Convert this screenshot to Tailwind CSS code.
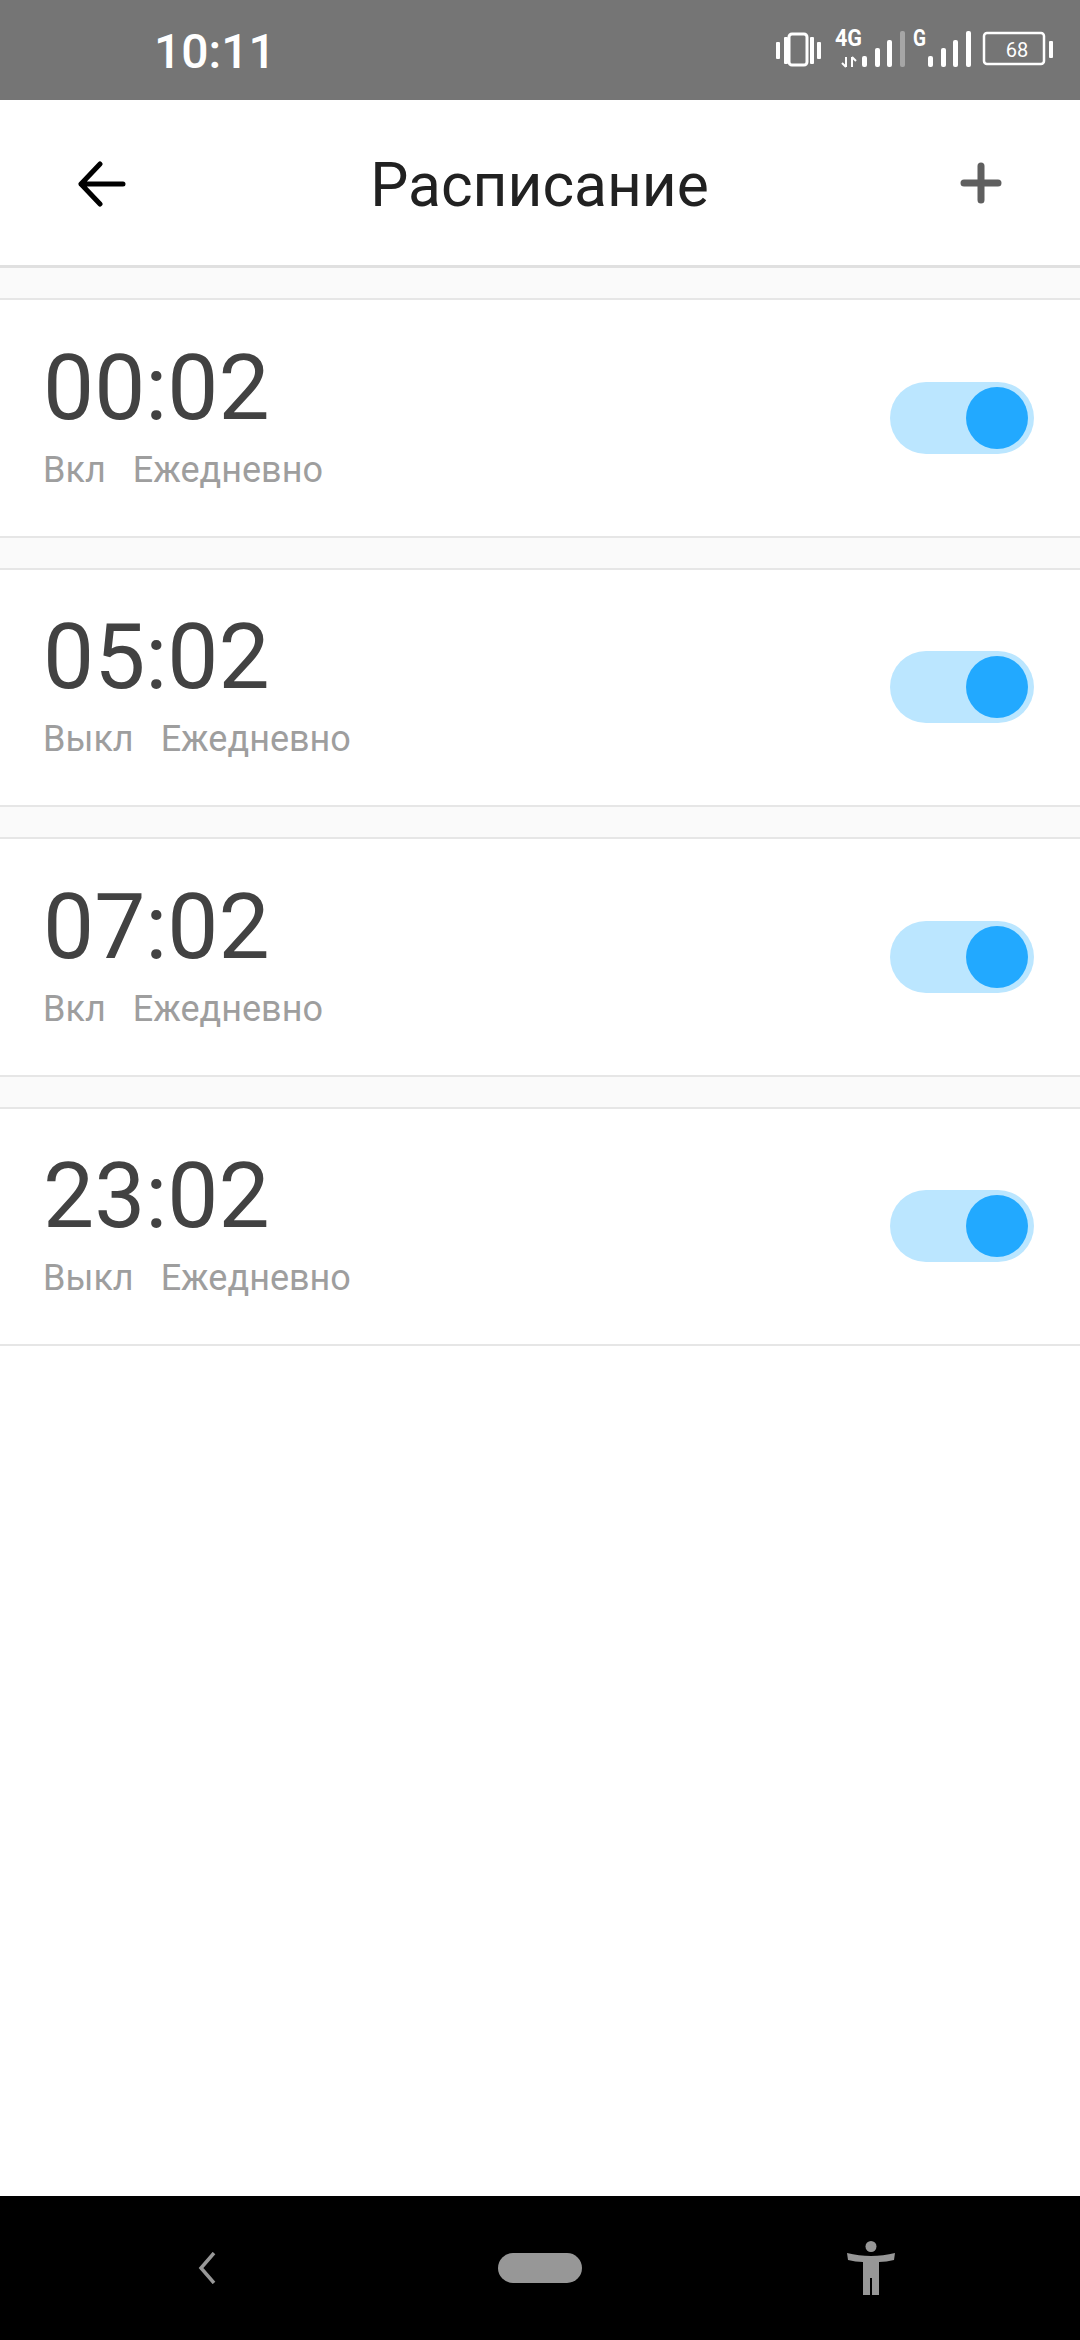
<!DOCTYPE html>
<html lang="ru">
<head>
    <meta charset="UTF-8">
    <meta name="viewport" content="width=device-width, initial-scale=1.0">
    <title>Расписание</title>
    <script src="https://cdn.jsdelivr.net/npm/@tailwindcss/browser@4"></script>
</head>
<body class="bg-white font-['Roboto',sans-serif]">
    <div class="flex flex-col w-[1080px] h-[2340px] overflow-hidden">
        <!-- status bar -->
        <div class="h-[100px] shrink-0 bg-[#757575] flex items-center justify-between pl-[154px] pr-[26px] text-white">
            <span class="text-[48px] leading-none font-medium pt-[3px]">10:11</span>
            <svg width="278" height="100" viewBox="776 0 278 100" fill="#fff">
                <rect x="776" y="42" width="4" height="17" rx="1"/>
                <rect x="784" y="37" width="4" height="27" rx="1"/>
                <rect x="789" y="34" width="18" height="31" rx="3" fill="none" stroke="#fff" stroke-width="3"/>
                <rect x="810" y="37" width="4" height="27" rx="1"/>
                <rect x="817" y="42" width="4" height="17" rx="1"/>
                <text x="835" y="46" font-family="Roboto" font-weight="700" font-size="23" textLength="27" lengthAdjust="spacingAndGlyphs">4G</text>
                <path d="M846 57v10M846 67l-4-4M852 67v-10M852 57l4 4" stroke="#fff" stroke-width="2" fill="none"/>
                <rect x="862" y="56" width="5" height="11" rx="2"/>
                <rect x="875" y="48" width="5" height="19" rx="2"/>
                <rect x="887" y="40" width="5" height="27" rx="2"/>
                <rect x="900" y="31" width="5" height="36" rx="2" fill="#a6a6a6"/>
                <text x="913" y="46" font-family="Roboto" font-weight="700" font-size="23" textLength="13" lengthAdjust="spacingAndGlyphs">G</text>
                <rect x="928" y="56" width="5" height="11" rx="2"/>
                <rect x="941" y="48" width="5" height="19" rx="2"/>
                <rect x="953" y="40" width="5" height="27" rx="2"/>
                <rect x="966" y="31" width="5" height="36" rx="2"/>
                <rect x="984" y="33" width="60" height="31" rx="3" fill="none" stroke="#fff" stroke-width="2.5"/>
                <text x="1017" y="57" font-family="Roboto" font-size="20" text-anchor="middle">68</text>
                <rect x="1049" y="41" width="4" height="17" rx="1"/>
            </svg>
        </div>

        <!-- header -->
        <div class="h-[168px] shrink-0 bg-white border-b-[3px] border-[#e0e0e0] flex items-center justify-between pl-[78px] pr-[78px]">
            <svg class="mt-[2px]" width="48" height="46" viewBox="0 0 48 46" fill="none" stroke="#000" stroke-width="5" stroke-linecap="round" stroke-linejoin="round">
                <path d="M45 23H3M22 3L3 23l19 20"/>
            </svg>
            <h1 class="text-[60.500px] leading-none text-[#212121] pt-[8px] mr-[7px]">Расписание</h1>
            <svg width="42" height="42" viewBox="0 0 42 42" fill="none" stroke="#5f5f5f" stroke-width="7" stroke-linecap="round">
                <path d="M21 4v34M4 21h34"/>
            </svg>
        </div>

        <!-- schedule list -->
        <div class="flex-1 bg-white">
            <div class="h-[30px] bg-[#fafafa]"></div>
            <div class="h-[239.5px] bg-white border-y-2 border-[#e6e6e6] flex items-center justify-between pl-[43px] pr-[46px]">
                <div class="pb-[2px]">
                    <div class="text-[91px] leading-[90px] text-[#424242]">00:02</div>
                    <div class="flex gap-[27px] mt-[16px] text-[36px] leading-[42px] text-[#9e9e9e]"><span>Вкл</span><span>Ежедневно</span></div>
                </div>
                <div class="w-[144px] h-[72px] rounded-full bg-[#bbe6ff] flex items-center justify-end pr-[6px]"><div class="w-[62px] h-[62px] rounded-full bg-[#22a9ff]"></div></div>
            </div>
            <div class="h-[30px] bg-[#fafafa]"></div>
            <div class="h-[239.5px] bg-white border-y-2 border-[#e6e6e6] flex items-center justify-between pl-[43px] pr-[46px]">
                <div class="pb-[2px]">
                    <div class="text-[91px] leading-[90px] text-[#424242]">05:02</div>
                    <div class="flex gap-[27px] mt-[16px] text-[36px] leading-[42px] text-[#9e9e9e]"><span>Выкл</span><span>Ежедневно</span></div>
                </div>
                <div class="w-[144px] h-[72px] rounded-full bg-[#bbe6ff] flex items-center justify-end pr-[6px]"><div class="w-[62px] h-[62px] rounded-full bg-[#22a9ff]"></div></div>
            </div>
            <div class="h-[30px] bg-[#fafafa]"></div>
            <div class="h-[239.5px] bg-white border-y-2 border-[#e6e6e6] flex items-center justify-between pl-[43px] pr-[46px]">
                <div class="pb-[2px]">
                    <div class="text-[91px] leading-[90px] text-[#424242]">07:02</div>
                    <div class="flex gap-[27px] mt-[16px] text-[36px] leading-[42px] text-[#9e9e9e]"><span>Вкл</span><span>Ежедневно</span></div>
                </div>
                <div class="w-[144px] h-[72px] rounded-full bg-[#bbe6ff] flex items-center justify-end pr-[6px]"><div class="w-[62px] h-[62px] rounded-full bg-[#22a9ff]"></div></div>
            </div>
            <div class="h-[30px] bg-[#fafafa]"></div>
            <div class="h-[239.5px] bg-white border-y-2 border-[#e6e6e6] flex items-center justify-between pl-[43px] pr-[46px]">
                <div class="pb-[2px]">
                    <div class="text-[91px] leading-[90px] text-[#424242]">23:02</div>
                    <div class="flex gap-[27px] mt-[16px] text-[36px] leading-[42px] text-[#9e9e9e]"><span>Выкл</span><span>Ежедневно</span></div>
                </div>
                <div class="w-[144px] h-[72px] rounded-full bg-[#bbe6ff] flex items-center justify-end pr-[6px]"><div class="w-[62px] h-[62px] rounded-full bg-[#22a9ff]"></div></div>
            </div>
        </div>

        <!-- nav bar -->
        <div class="h-[144px] shrink-0 bg-black flex items-center pl-[198px]">
            <svg width="18" height="32" viewBox="0 0 18 32" fill="none" stroke="#979797" stroke-width="3.5"><path d="M16 1L3 16l13 15"/></svg>
            <div class="ml-[282px] w-[84px] h-[30px] rounded-[15px] bg-[#979797]"></div>
            <svg class="ml-[265px]" width="48" height="54" viewBox="0 0 48 54" fill="#979797">
                <ellipse cx="24" cy="5.500" rx="5.500" ry="5.500"/>
                <path d="M0 12c8 2 16 3 24 3s16-1 24-3l-1 7c-5 1-10 2-15 2v33h-7V37h-2v17h-7V21c-5 0-10-1-15-2z"/>
            </svg>
        </div>
    </div>
</body>
</html>
